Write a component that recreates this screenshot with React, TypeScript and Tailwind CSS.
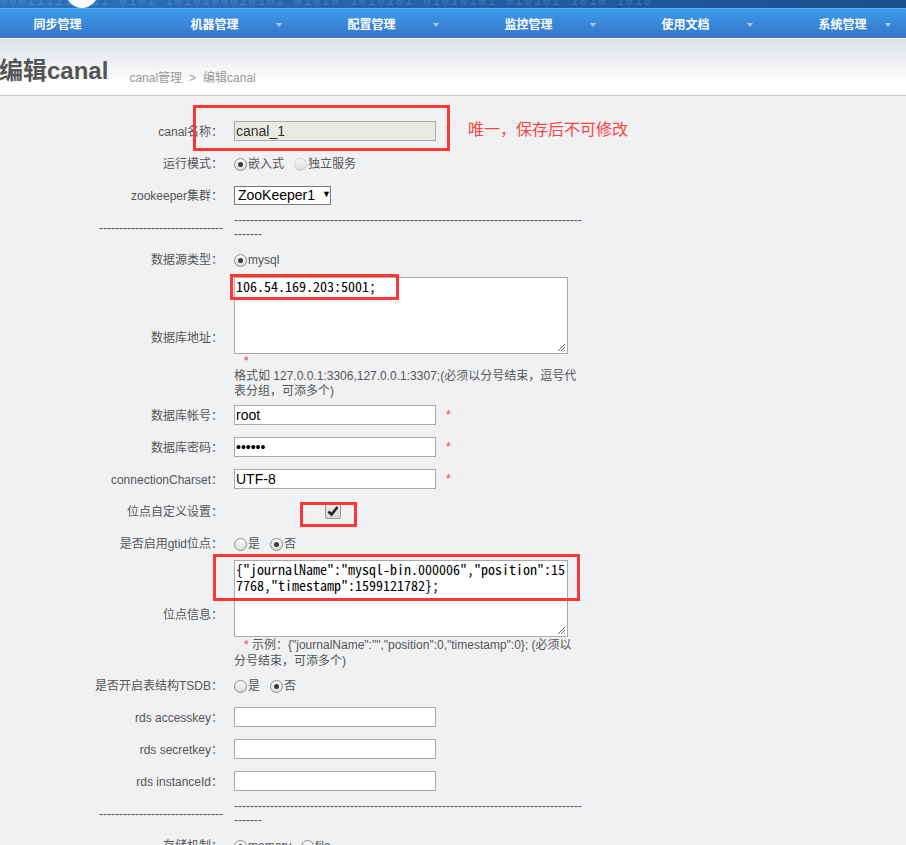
import React from "react";

const navs = ["同步管理", "机器管理", "配置管理", "监控管理", "使用文档", "系统管理"];

const dash = (n: number) => "-".repeat(n);

function Radio({ checked = false, disabled = false }: { checked?: boolean; disabled?: boolean }) {
  return (
    <span
      className={`inline-flex h-[13px] w-[13px] shrink-0 items-center justify-center rounded-full border bg-linear-to-b from-[#fbfbfb] to-[#dcdcdc] ${
        disabled ? "border-[#cdcdcd]" : "border-[#8c8c8c]"
      }`}
    >
      {checked && <span className="h-[5px] w-[5px] rounded-full bg-[#3a3a3a]" />}
    </span>
  );
}

type Opt = { text: string; checked?: boolean; disabled?: boolean };

function Choice({ items }: { items: Opt[] }) {
  return (
    <div className="flex items-center gap-[10px] pt-[2px]">
      {items.map((it) => (
        <label key={it.text} className="flex items-center">
          <Radio checked={it.checked} disabled={it.disabled} />
          <span className="ml-[1px]">{it.text}</span>
        </label>
      ))}
    </div>
  );
}

function Field({ value = "", disabled = false, star = true }: { value?: string; disabled?: boolean; star?: boolean }) {
  return (
    <>
      <div
        className={`h-[20px] w-[202px] border border-[#a9a9a9] pl-[1px] text-[14px] leading-[18px] ${
          disabled ? "bg-[#ebe9e3] text-[#333]" : "bg-white text-black"
        }`}
      >
        {value}
      </div>
      {star && <span className="ml-[10px] text-[12px] text-[#ff3333]">*</span>}
    </>
  );
}

function Grip() {
  return (
    <svg className="absolute bottom-[1px] right-[1px]" width="9" height="9" viewBox="0 0 9 9">
      <path d="M8 1 L1 8 M8 4 L4 8 M8 7 L7 8" stroke="#6a6a6a" strokeWidth="1" />
    </svg>
  );
}

function Area({ lines }: { lines: string[] }) {
  return (
    <div className="relative h-[77px] w-[334px] overflow-hidden border border-[#a9a9a9] bg-white pl-[1px] font-['Noto_Sans_Mono_CJK_SC','Liberation_Mono',monospace] text-[14px] leading-[16px] text-black">
      {lines.map((l) => (
        <div key={l} className="whitespace-pre">
          {l}
        </div>
      ))}
      <Grip />
    </div>
  );
}

function Row({ label, h = "h-[32px]", children }: { label: React.ReactNode; h?: string; children?: React.ReactNode }) {
  return (
    <div className={`relative flex items-center ${h}`}>
      <div className="w-[226px] shrink-0 pr-[3px] pt-[1px] text-right">{label}</div>
      <div className="flex items-center pl-[8px]">{children}</div>
    </div>
  );
}

function Sep() {
  return (
    <Row label={dash(31)} h="h-[32px]">
      <div className="w-[350px] leading-[14px]">
        {dash(87)}
        <br />
        {dash(7)}
      </div>
    </Row>
  );
}

export default function App() {
  return (
    <div className="min-h-screen w-[906px] overflow-hidden bg-[#f0f1f3] font-['Liberation_Sans','Noto_Sans_CJK_SC',sans-serif] text-[12px] text-[#555]">
      {/* banner strip */}
      <div className="relative h-[8px] overflow-hidden bg-linear-to-r from-[#2d72bd] to-[#1b4e8c]">
        <div className="absolute left-0 top-[-7px] whitespace-nowrap font-['Liberation_Mono',monospace] text-[12px] tracking-[2px] text-[#a8d0f7]/25">
          000111111111 0101 1010100010101 01010 1010101 01010101 010101 1010 1010
        </div>
        <div className="absolute left-[66px] top-[-24px] h-[32px] w-[32px] rounded-full bg-white" />
      </div>
      <div className="h-[1px] bg-[#55b1f4]" />
      {/* nav */}
      <div className="h-[30px] overflow-hidden border-b border-white bg-linear-to-b from-[#3c9cec] to-[#3674c6]">
        <div className="ml-[-21px] flex h-full pt-[2px]">
          {navs.map((n, i) => (
            <div key={n} className="relative flex w-[157px] shrink-0 items-center justify-center text-[12px] font-bold text-white">
              {n}
              {i > 0 && (
                <span
                  className={`absolute top-[12px] h-0 w-0 border-l-[3px] border-r-[3px] border-t-[4px] border-l-transparent border-r-transparent border-t-[#a9d0f4] ${
                    i === 5 ? "right-[30px]" : "right-[11px]"
                  }`}
                />
              )}
            </div>
          ))}
        </div>
      </div>
      {/* header */}
      <div className="flex h-[57px] items-baseline border-b border-[#c9c9c9] bg-linear-to-b from-[#dde1e7] to-white to-80% pt-[18px]">
        <h1 className="ml-[-1px] text-[24px] font-bold leading-[28px] text-[#555]">编辑canal</h1>
        <div className="ml-[21px] translate-y-[3px] text-[12px] text-[#999]">
          canal管理<span className="px-[7px]">&gt;</span>编辑canal
        </div>
      </div>

      {/* form */}
      <div className="pt-[19px]">
        <Row label="canal名称：">
          <Field value="canal_1" disabled />
          <div className="pointer-events-none absolute left-[193px] top-[-10px] h-[46px] w-[257px] border-[3px] border-[#ff3636]" />
          <div className="absolute left-[468px] top-[5px] text-[16px] leading-[20px] text-[#ff4242]">唯一，保存后不可修改</div>
        </Row>
        <Row label="运行模式：">
          <Choice items={[{ text: "嵌入式", checked: true }, { text: "独立服务", disabled: true }]} />
        </Row>
        <Row label="zookeeper集群：">
          <div className="flex h-[19px] w-[97px] items-center border border-[#7a7a7a] bg-white pl-[3px] text-[14px] text-black">
            ZooKeeper1
            <span className="ml-[7px] text-[9px]">▼</span>
          </div>
        </Row>
        <Sep />
        <Row label="数据源类型：">
          <Choice items={[{ text: "mysql", checked: true }]} />
        </Row>
        <Row label="数据库地址：" h="h-[124px]">
          <div className="flex flex-col pt-[1px]">
            <Area lines={["106.54.169.203:5001;"]} />
            <div className="h-[15px] pl-[10px] leading-[14px] text-[#ff3333]">*</div>
            <div className="leading-[15px]">
              格式如 127.0.0.1:3306,127.0.0.1:3307;(必须以分号结束，逗号代
              <br />
              表分组，可添多个)
            </div>
          </div>
          <div className="pointer-events-none absolute left-[230px] top-[-1px] h-[26px] w-[169px] border-[3px] border-[#ff3636]" />
        </Row>
        <Row label="数据库帐号：">
          <Field value="root" />
        </Row>
        <Row label="数据库密码：">
          <Field value="••••••" />
        </Row>
        <Row label="connectionCharset：">
          <Field value="UTF-8" />
        </Row>
        <Row label="位点自定义设置：">
          <span className="ml-[91px] flex h-[16px] w-[16px] items-center justify-center rounded-[2px] border border-[#9a9a9a] bg-linear-to-b from-[#f2f2f2] to-[#d6d6d6]">
            <svg width="12" height="12" viewBox="0 0 12 12">
              <path d="M1.5 6.5 L4.5 9.5 L10.5 2" fill="none" stroke="#262626" strokeWidth="2.6" />
            </svg>
          </span>
          <div className="pointer-events-none absolute left-[300px] top-[7px] h-[25px] w-[57px] border-[3px] border-[#ff3636]" />
        </Row>
        <Row label="是否启用gtid位点：">
          <Choice items={[{ text: "是" }, { text: "否", checked: true }]} />
        </Row>
        <Row label="位点信息：" h="h-[110px]">
          <div className="flex flex-col pt-[1px]">
            <Area lines={['{"journalName":"mysql-bin.000006","position":15', '7768,"timestamp":1599121782};']} />
            <div className="leading-[16px]">
              <span className="ml-[10px] text-[#ff3333]">*</span> 示例：{'{"journalName":"","position":0,"timestamp":0}'}; (必须以
              <br />
              分号结束，可添多个)
            </div>
          </div>
          <div className="pointer-events-none absolute left-[213px] top-[-5px] h-[47px] w-[367px] border-[3px] border-[#ff3636]" />
        </Row>
        <Row label="是否开启表结构TSDB：">
          <Choice items={[{ text: "是" }, { text: "否", checked: true }]} />
        </Row>
        <Row label="rds accesskey：">
          <Field star={false} />
        </Row>
        <Row label="rds secretkey：">
          <Field star={false} />
        </Row>
        <Row label="rds instanceId：">
          <Field star={false} />
        </Row>
        <Sep />
        <Row label="存储机制：">
          <Choice items={[{ text: "memory", checked: true }, { text: "file" }]} />
        </Row>
        <Row label="内存存储batch获取模式：">
          <Choice items={[{ text: "MEMSIZE", checked: true }, { text: "ITEMSIZE" }]} />
        </Row>
      </div>
    </div>
  );
}
